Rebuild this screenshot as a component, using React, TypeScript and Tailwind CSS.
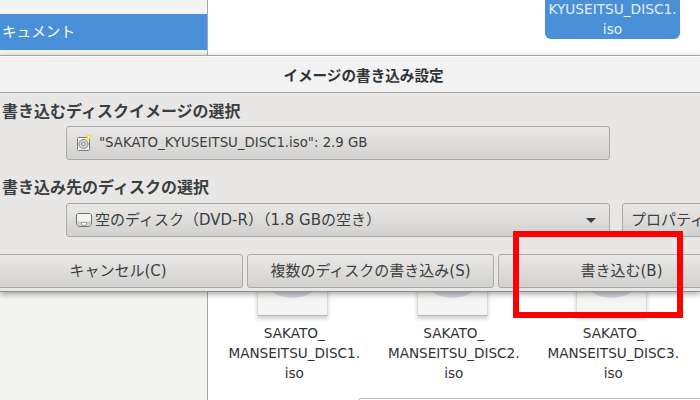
const font = "font-['DejaVu_Sans','Noto_Sans_CJK_JP',sans-serif]";
const btn = "border border-[#a9a9a7] rounded-[3px] bg-gradient-to-b from-[#e9e8e7] to-[#d2d1cf] text-[#3b3f40]";

function FileItem({ name }: { name: string }) {
  return (
    <div className="w-[159.5px] flex flex-col items-center shrink-0">
      <div className="relative w-[71px] h-[116px] bg-[#f5f5f4] border border-[#dcdcda] border-b-[#b5b5b3] shadow-[0_3px_4px_rgba(0,0,0,0.18)] overflow-hidden">
        <div className="absolute left-[-2px] bottom-[17px] w-[73px] h-[73px] rounded-full bg-gradient-to-b from-[#a9a9aa] via-[#bcbcbd] to-[#d8d8e0]" />
      </div>
      <div className="mt-[7px] ml-[3px] text-[13.6px] leading-[20px] text-[#2e3436] text-center whitespace-nowrap">
        <div>SAKATO_</div>
        <div>{name}.</div>
        <div>iso</div>
      </div>
    </div>
  );
}

function DiscImageIcon() {
  return (
    <svg width="16" height="18" viewBox="0 0 16 18" className="shrink-0">
      <rect x="1.5" y="3.5" width="12" height="13" rx="1" fill="#f4f4f3" stroke="#77797a" />
      <circle cx="7.5" cy="10" r="4.6" fill="#cfcfcf" stroke="#8a8a8a" />
      <circle cx="7.5" cy="10" r="1.6" fill="#f4f4f3" stroke="#8a8a8a" />
      <rect x="10.5" y="1" width="4.5" height="4.5" fill="#f2dc2c" />
      <rect x="12" y="2.5" width="1.5" height="1.5" fill="#fffbe0" />
    </svg>
  );
}

function DriveIcon() {
  return (
    <svg width="16" height="16" viewBox="0 0 16 16" className="shrink-0">
      <path d="M2 1.5h12l1.5 1.5v8a3.5 3.5 0 0 1-3.5 3.5H4A3.5 3.5 0 0 1 .5 11V3z" fill="#f2f2f1" stroke="#6f7273" />
      <path d="M1 9.5h14v2a2.5 2.5 0 0 1-2.5 2.5h-9A2.5 2.5 0 0 1 1 11.500z" fill="#d2d2d1" />
      <path d="M5 10.500h6l-1.500 3h-3z" fill="#f6f6f6" stroke="#7c7c7c" strokeWidth="0.6" />
    </svg>
  );
}

export default function App() {
  return (
    <div className={`relative w-[700px] h-[400px] overflow-hidden bg-white ${font}`}>
      {/* file chooser behind */}
      <div className="flex h-full">
        <aside className="w-[208px] shrink-0 bg-[#f3f3f2] border-r border-[#a8a8a6] pt-[14px]">
          <div className="h-[36px] bg-[#4a90d9] text-white text-[14.6px] leading-[35px] pl-[2px]">
            キュメント
          </div>
        </aside>
        <main className="flex-1 min-w-0 relative">
          <div className="flex justify-end pr-[20px]">
            <div className="w-[135px] h-[39px] bg-[#4a90d9] rounded-b-[6px] text-[#e4eefa] text-[13.7px] leading-[20px] text-center whitespace-nowrap">
              <div className="-mt-[1px]">KYUSEITSU_DISC1.</div>
              <div>iso</div>
            </div>
          </div>
          <div className="flex mt-[161px] pl-[5px]">
            <FileItem name="MANSEITSU_DISC1" />
            <FileItem name="MANSEITSU_DISC2" />
            <FileItem name="MANSEITSU_DISC3" />
          </div>
          <div className="absolute left-[150px] top-[398px] w-[400px] h-[10px] border border-[#b8b8b6] rounded-[3px]" />
        </main>
      </div>

      {/* burn settings dialog */}
      <section className="absolute left-0 top-[55px] w-[700px] h-[237px] bg-[#e8e7e6] border-t border-[#a5a5a3] shadow-[0_2px_6px_rgba(0,0,0,0.35)] border-b border-b-[#8f8f8d]">
        <header className="h-[37px] bg-[#f2f2f2] border-t border-t-white border-b border-[#a3a3a1] text-center pl-[27px] text-[14.6px] font-bold leading-[37px] text-[#2e3436]">
          イメージの書き込み設定
        </header>
        <div className="pl-[2px]">
          <h2 className="mt-[9px] h-[20px] text-[16px] leading-[20px] font-bold text-[#3a3e3f]">
            書き込むディスクイメージの選択
          </h2>
          <div className={`mt-[4px] ml-[64px] w-[544px] h-[34px] flex items-center gap-[7px] pl-[9px] text-[13.3px] ${btn}`}>
            <DiscImageIcon />
            <span>"SAKATO_KYUSEITSU_DISC1.iso": 2.9 GB</span>
          </div>
          <h2 className="mt-[18px] h-[20px] text-[16px] leading-[20px] font-bold text-[#3a3e3f]">
            書き込み先のディスクの選択
          </h2>
          <div className="mt-[5px] flex gap-[12px] whitespace-nowrap">
            <div className={`ml-[64px] w-[544px] h-[34px] shrink-0 flex items-center gap-[3px] pl-[9px] pr-[13px] text-[15px] ${btn}`}>
              <DriveIcon />
              <span className="flex-1">空のディスク（DVD-R）（1.8 GBの空き）</span>
              <span className="w-0 h-0 border-x-[5px] border-x-transparent border-t-[5px] border-t-[#3b3f40]" />
            </div>
            <div className={`w-[120px] h-[34px] shrink-0 pl-[8px] text-[15px] leading-[32px] ${btn}`}>
              プロパティ
            </div>
          </div>
        </div>
        <div className="mt-[17px] -ml-[7px] grid grid-cols-[250px_247px_247px] gap-[4px] text-[15px] text-center whitespace-nowrap">
          <div className={`h-[34px] leading-[33px] ${btn}`}>キャンセル(C)</div>
          <div className={`h-[34px] leading-[33px] ${btn}`}>複数のディスクの書き込み(S)</div>
          <div className={`h-[34px] leading-[33px] ${btn}`}>書き込む(B)</div>
        </div>
      </section>

      {/* red annotation */}
      <div className="absolute left-[513px] top-[231px] w-[170px] h-[87px] border-[6px] border-[#ff0000]" />
    </div>
  );
}
